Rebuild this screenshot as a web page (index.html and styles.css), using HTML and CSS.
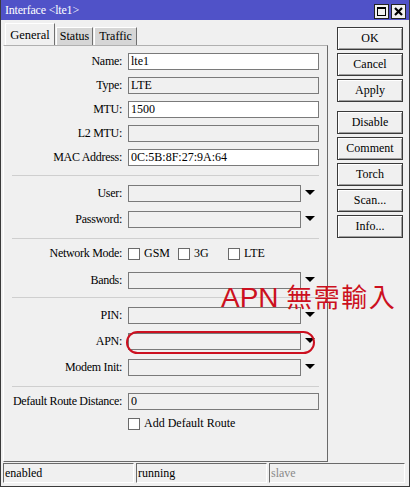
FILE: index.html
```html
<!DOCTYPE html>
<html>
<head>
<meta charset="utf-8">
<link rel="stylesheet" href="styles.css">
</head>
<body>
<div class="window">
  <div class="titlebar">
    <span class="title">Interface &lt;lte1&gt;</span>
    <div class="tb-btns">
      <span class="tb-btn">
        <svg width="13" height="13" viewBox="0 0 13 13"><rect x="2.5" y="2.5" width="8" height="8" fill="none" stroke="#000" stroke-width="1"/><rect x="2" y="2" width="9" height="2" fill="#000"/></svg>
      </span>
      <span class="tb-btn">
        <svg width="13" height="13" viewBox="0 0 13 13"><path d="M3 3 L10 10 M10 3 L3 10" stroke="#000" stroke-width="2.2"/></svg>
      </span>
    </div>
  </div>
  <div class="main">
    <div class="left">
      <div class="tabs">
        <div class="tab active">General</div>
        <div class="tab t-status">Status</div>
        <div class="tab t-traffic">Traffic</div>
      </div>
      <div class="panel">
        <div class="group g1">
          <div class="row"><span class="lbl">Name:</span><span class="field">lte1</span></div>
          <div class="row"><span class="lbl">Type:</span><span class="field ro">LTE</span></div>
          <div class="row"><span class="lbl">MTU:</span><span class="field">1500</span></div>
          <div class="row"><span class="lbl">L2 MTU:</span><span class="field ro"></span></div>
          <div class="row"><span class="lbl">MAC Address:</span><span class="field">0C:5B:8F:27:9A:64</span></div>
        </div>
        <div class="sep s1"></div>
        <div class="group g2">
          <div class="row combo"><span class="lbl">User:</span><span class="field ro"></span><span class="arrow"></span></div>
          <div class="row combo"><span class="lbl">Password:</span><span class="field ro"></span><span class="arrow"></span></div>
        </div>
        <div class="sep s2"></div>
        <div class="row nm">
          <span class="lbl">Network Mode:</span>
          <span class="opt"><span class="cb"></span>GSM</span>
          <span class="opt"><span class="cb"></span>3G</span>
          <span class="opt"><span class="cb"></span>LTE</span>
        </div>
        <div class="row combo bands"><span class="lbl">Bands:</span><span class="field ro"></span><span class="arrow"></span></div>
        <div class="sep s3"></div>
        <div class="group g3">
          <div class="row combo"><span class="lbl">PIN:</span><span class="field ro"></span><span class="arrow"></span></div>
          <div class="row combo"><span class="lbl">APN:</span><span class="field ro"></span><span class="arrow"></span></div>
          <div class="row combo"><span class="lbl">Modem Init:</span><span class="field ro"></span><span class="arrow"></span></div>
        </div>
        <div class="sep s4"></div>
        <div class="row drd"><span class="lbl">Default Route Distance:</span><span class="field ro">0</span></div>
        <div class="row adr"><span class="lbl"></span><span class="opt"><span class="cb"></span>Add Default Route</span></div>
      </div>
    </div>
    <div class="buttons">
      <div class="btn">OK</div>
      <div class="btn">Cancel</div>
      <div class="btn">Apply</div>
      <div class="btn gapped">Disable</div>
      <div class="btn">Comment</div>
      <div class="btn">Torch</div>
      <div class="btn">Scan...</div>
      <div class="btn">Info...</div>
    </div>
  </div>
  <div class="statusbar">
    <div class="sf w1">enabled</div>
    <div class="sf w2">running</div>
    <div class="sf w3 dim">slave</div>
  </div>
  <div class="note">APN <span class="cjk">無需輸入</span></div>
  <div class="oval"></div>
</div>
</body>
</html>
```
FILE: styles.css
```css
body {
  margin: 0;
  background: #f0f0f0;
  font-family: "Liberation Serif", "Noto Sans CJK TC", serif;
  font-size: 12px;
  color: #000;
}
.window {
  position: relative;
  width: 410px;
  height: 487px;
  box-sizing: border-box;
  border: 1px solid #3a3a3a;
  border-top: 0;
  background: #f0f0f0;
  display: flex;
  flex-direction: column;
  overflow: hidden;
}
.titlebar {
  height: 20px;
  flex: none;
  background: #5052c8;
  display: flex;
  align-items: center;
  padding-left: 4px;
  color: #fff;
}
.title { flex: 1; line-height: 20px; letter-spacing: -0.2px; }
.tb-btns {
  display: flex;
  gap: 2px;
  margin-right: 3px;
  align-self: flex-start;
  margin-top: 4px;
}
.tb-btn {
  width: 15px;
  height: 15px;
  box-sizing: border-box;
  background: #f0f0f0;
  border: 1px solid #222;
  display: flex;
  align-items: center;
  justify-content: center;
}
.tb-btn svg { display: block; }
.main {
  height: 442px;
  flex: none;
  display: flex;
  padding-left: 2px;
}
.left {
  width: 325px;
  display: flex;
  flex-direction: column;
  padding-top: 3px;
}
.tabs {
  height: 22px;
  display: flex;
  align-items: flex-end;
  padding-left: 2px;
}
.tab {
  height: 18px;
  box-sizing: border-box;
  background: #d6d6d6;
  border-top: 1px solid #fff;
  border-left: 1px solid #fff;
  border-right: 1px solid #707070;
  line-height: 17px;
  margin-right: 1px;
  text-align: center;
}
.t-status { width: 37px; }
.t-traffic { width: 43px; }
.tab.active {
  height: 22px;
  background: #f0f0f0;
  width: 50px;
  line-height: 22px;
  font-size: 12.5px;
}
.panel {
  height: 417px;
  box-sizing: border-box;
  border-top: 1px solid #b0b0b0;
  border-left: 1px solid #fff;
  border-right: 1px solid #6a6a6a;
  border-bottom: 1px solid #6a6a6a;
  padding-top: 7px;
  display: flex;
  flex-direction: column;
}
.group { display: flex; flex-direction: column; }
.g1 { gap: 7px; }
.g2, .g3 { gap: 9px; }
.row {
  display: flex;
  align-items: center;
  height: 17px;
  flex: none;
}
.lbl {
  width: 118px;
  text-align: right;
  margin-right: 6px;
  white-space: nowrap;
  letter-spacing: -0.3px;
}
.field {
  width: 191px;
  height: 17px;
  box-sizing: border-box;
  border: 1px solid #7a7a7a;
  background: #fff;
  padding-left: 2px;
  line-height: 15px;
}
.field.ro { background: #f0f0f0; }
.combo .field { width: 173px; }
.arrow {
  margin-left: 4px;
  width: 0;
  height: 0;
  border-left: 5px solid transparent;
  border-right: 5px solid transparent;
  border-top: 5px solid #000;
  margin-top: -2px;
}
.sep {
  height: 0;
  border-top: 1px solid #cfcfcf;
  margin-left: 8px;
  width: 307px;
  flex: none;
}
.s1 { margin-top: 9px; margin-bottom: 9px; }
.s2 { margin-top: 10px; margin-bottom: 6px; }
.s3 { margin-top: 8px; margin-bottom: 9px; }
.s4 { margin-top: 10px; margin-bottom: 6px; }
.bands { margin-top: 10px; }
.opt {
  display: flex;
  align-items: center;
  width: 50px;
  white-space: nowrap;
}
.cb {
  width: 12px;
  height: 12px;
  box-sizing: border-box;
  border: 1px solid #6a6a6a;
  background: #fff;
  margin-right: 4px;
  flex: none;
}
.adr { margin-top: 7px; height: 13px; }
.adr .opt { width: auto; }
.buttons {
  margin-left: 9px;
  width: 66px;
  padding-top: 7px;
  display: flex;
  flex-direction: column;
  gap: 3px;
}
.btn {
  height: 23px;
  box-sizing: border-box;
  border: 1px solid #3a3a3a;
  box-shadow: inset 1px 1px 0 #fff, inset -1px -1px 0 #a0a0a0;
  background: #f0f0f0;
  text-align: center;
  line-height: 21px;
}
.btn.gapped { margin-top: 6px; }
.statusbar {
  flex: 1;
  display: flex;
  padding: 1px 0 0 2px;
  gap: 2px;
}
.sf {
  height: 20px;
  box-sizing: border-box;
  border-top: 1px solid #6a6a6a;
  border-left: 1px solid #6a6a6a;
  border-right: 1px solid #fff;
  border-bottom: 1px solid #fff;
  padding-left: 1px;
  line-height: 18px;
}
.w1 { width: 131px; }
.w2 { width: 131px; }
.w3 { width: 136px; }
.dim { color: #8a8a8a; }
.note {
  position: absolute;
  left: 220px;
  top: 283px;
  font-family: "Liberation Sans", "Noto Sans CJK TC", sans-serif;
  font-size: 28px;
  line-height: 29px;
  color: #cc1020;
  white-space: nowrap;
}
.cjk {
  font-family: "Noto Sans CJK TC", sans-serif;
  font-size: 26px;
  line-height: 0;
  letter-spacing: 1.5px;
}
.oval {
  position: absolute;
  left: 125px;
  top: 331px;
  width: 189px;
  height: 23px;
  box-sizing: border-box;
  border: 2.5px solid #cc1020;
  border-radius: 12px;
}
```
